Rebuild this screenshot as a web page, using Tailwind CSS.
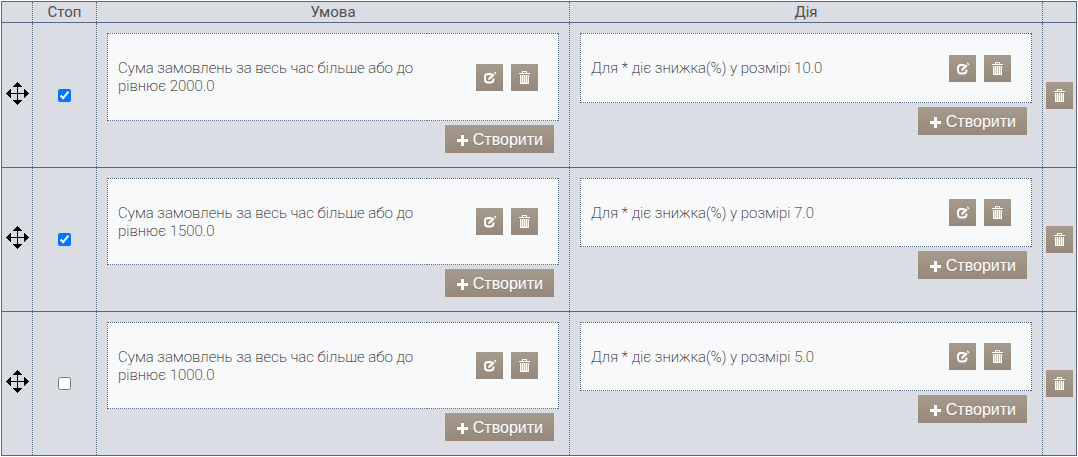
<!DOCTYPE html>
<html lang="uk">
<head>
    <meta charset="UTF-8">
    <meta name="viewport" content="width=device-width, initial-scale=1.0">
    <title>Знижки</title>
    <script src="https://cdn.jsdelivr.net/npm/@tailwindcss/browser@4"></script>
</head>
<body class="bg-white p-px font-[Roboto,sans-serif] text-[15px] leading-[18px] font-extralight text-[#111]">
    <!-- Icons -->
    <svg class="hidden">
        <symbol id="move" viewBox="0 0 23 23">
            <path shape-rendering="crispEdges" d="M11 5h1v13h-1zM5 11h6v1H5zM12 11h6v1h-6zM11 0h1v1h1v1h1v1h1v1h1v1H7V4h1V3h1V2h1V1h1zM11 23h1v-1h1v-1h1v-1h1v-1h1v-1H7v1h1v1h1v1h1v1h1zM0 11v1h1v1h1v1h1v1h1v1h1V7H4v1H3v1H2v1H1v1zM23 11v1h-1v1h-1v1h-1v1h-1v1h-1V7h1v1h1v1h1v1h1v1z"/>
        </symbol>
        <symbol id="edit" viewBox="0 0 27 27">
            <path d="M15.500 10H12a3 3 0 0 0-3 3v2.500a3 3 0 0 0 3 3h2.500a3 3 0 0 0 3-3V14.500" fill="none" stroke="#fff" stroke-width="1.800"/>
            <path d="M12 16l.7-2.500 4.300-4.300 1.700 1.700-4.300 4.300zM17.900 8.500l.9-.9 1.700 1.700-.9.900z" fill="#fff"/>
        </symbol>
        <symbol id="trash" viewBox="0 0 27 27">
            <path d="M11 7h5v2h3v1H8V9h3zM12 8v1h3V8z" fill="#fff" fill-rule="evenodd" shape-rendering="crispEdges"/>
            <path d="M9 11h9v9H9z" fill="#fff" shape-rendering="crispEdges"/>
            <path d="M10 11h1v8h-1zM12 11h1v8h-1zM14 11h1v8h-1zM16 11h1v8h-1z" fill="#a3978b" fill-opacity=".6" shape-rendering="crispEdges"/>
        </symbol>
        <symbol id="plus" viewBox="0 0 11 11">
            <path d="M4 0h3v4h4v3H7v4H4V7H0V4h4z" fill="#fff"/>
        </symbol>
    </svg>

    <table class="w-full table-fixed border-collapse border border-[#566983] bg-[#dadde4]">
        <colgroup>
            <col class="w-[31px]">
            <col class="w-[64px]">
            <col>
            <col>
            <col class="w-[34px]">
        </colgroup>
        <thead>
            <tr class="h-[21px] border-b border-[#566983] text-[#505050]">
                <th class="border-r border-r-[#566983] [border-right-style:dotted]"></th>
                <th class="border-r border-r-[#566983] [border-right-style:dotted] p-0 font-normal">Стоп</th>
                <th class="border-r border-r-[#566983] [border-right-style:dotted] p-0 font-normal">Умова</th>
                <th class="border-r border-r-[#566983] [border-right-style:dotted] p-0 font-normal">Дія</th>
                <th></th>
            </tr>
        </thead>
        <tbody>
            <tr class="h-[145px] border-b border-[#566983]">
                <td class="border-r border-r-[#566983] [border-right-style:dotted] p-0 pb-1"><svg class="mx-auto size-[23px] cursor-move"><use href="#move"/></svg></td>
                <td class="border-r border-r-[#566983] [border-right-style:dotted] p-0 text-center"><input type="checkbox" aria-label="Стоп" checked class="block mx-auto size-[13px]"></td>
                <td class="border-r border-r-[#566983] [border-right-style:dotted] p-[10px] align-top">
                    <div class="flex h-[88px] border-x border-dotted border-[#566983] bg-[#f8f9fb]">
                        <div class="flex flex-1 items-center border-y border-dotted border-[#566983] pl-[10px]">Сума замовлень за весь час більше або до рівнює 2000.0</div>
                        <div class="flex w-[131px] items-center justify-end gap-2 border-y border-dotted border-[#566983] pr-5">
                            <button type="button" aria-label="Редагувати" class="size-[27px] bg-linear-to-b from-[#a69a8e] to-[#96897b]"><svg class="size-[27px]"><use href="#edit"/></svg></button>
                            <button type="button" aria-label="Видалити" class="size-[27px] bg-linear-to-b from-[#a69a8e] to-[#96897b]"><svg class="size-[27px]"><use href="#trash"/></svg></button>
                        </div>
                    </div>
                    <button type="button" class="mt-1 mr-[5px] ml-auto flex h-7 items-center gap-[5px] bg-linear-to-b from-[#a69a8e] to-[#96897b] pt-[2px] pr-[11px] pl-3 font-[Liberation_Sans,sans-serif] text-base font-normal text-white text-shadow-2xs"><svg class="size-[11px]"><use href="#plus"/></svg>Створити</button>
                </td>
                <td class="border-r border-r-[#566983] [border-right-style:dotted] p-[10px] align-top">
                    <div class="flex h-[70px] border-x border-dotted border-[#566983] bg-[#f8f9fb]">
                        <div class="flex flex-1 items-center border-y border-dotted border-[#566983] pl-[10px]">Для * діє знижка(%) у розмірі 10.0</div>
                        <div class="flex w-[131px] items-center justify-end gap-2 border-y border-dotted border-[#566983] pr-5">
                            <button type="button" aria-label="Редагувати" class="size-[27px] bg-linear-to-b from-[#a69a8e] to-[#96897b]"><svg class="size-[27px]"><use href="#edit"/></svg></button>
                            <button type="button" aria-label="Видалити" class="size-[27px] bg-linear-to-b from-[#a69a8e] to-[#96897b]"><svg class="size-[27px]"><use href="#trash"/></svg></button>
                        </div>
                    </div>
                    <button type="button" class="mt-1 mr-[5px] ml-auto flex h-7 items-center gap-[5px] bg-linear-to-b from-[#a69a8e] to-[#96897b] pt-[2px] pr-[11px] pl-3 font-[Liberation_Sans,sans-serif] text-base font-normal text-white text-shadow-2xs"><svg class="size-[11px]"><use href="#plus"/></svg>Створити</button>
                </td>
                <td class="p-0"><button type="button" aria-label="Видалити" class="mx-auto block size-[27px] bg-linear-to-b from-[#a69a8e] to-[#96897b]"><svg class="size-[27px]"><use href="#trash"/></svg></button></td>
            </tr>
            <tr class="h-[144px] border-b border-[#566983]">
                <td class="border-r border-r-[#566983] [border-right-style:dotted] p-0 pb-1"><svg class="mx-auto size-[23px] cursor-move"><use href="#move"/></svg></td>
                <td class="border-r border-r-[#566983] [border-right-style:dotted] p-0 text-center"><input type="checkbox" aria-label="Стоп" checked class="block mx-auto size-[13px]"></td>
                <td class="border-r border-r-[#566983] [border-right-style:dotted] p-[10px] align-top">
                    <div class="flex h-[87px] border-x border-dotted border-[#566983] bg-[#f8f9fb]">
                        <div class="flex flex-1 items-center border-y border-dotted border-[#566983] pl-[10px]">Сума замовлень за весь час більше або до рівнює 1500.0</div>
                        <div class="flex w-[131px] items-center justify-end gap-2 border-y border-dotted border-[#566983] pr-5">
                            <button type="button" aria-label="Редагувати" class="size-[27px] bg-linear-to-b from-[#a69a8e] to-[#96897b]"><svg class="size-[27px]"><use href="#edit"/></svg></button>
                            <button type="button" aria-label="Видалити" class="size-[27px] bg-linear-to-b from-[#a69a8e] to-[#96897b]"><svg class="size-[27px]"><use href="#trash"/></svg></button>
                        </div>
                    </div>
                    <button type="button" class="mt-1 mr-[5px] ml-auto flex h-7 items-center gap-[5px] bg-linear-to-b from-[#a69a8e] to-[#96897b] pt-[2px] pr-[11px] pl-3 font-[Liberation_Sans,sans-serif] text-base font-normal text-white text-shadow-2xs"><svg class="size-[11px]"><use href="#plus"/></svg>Створити</button>
                </td>
                <td class="border-r border-r-[#566983] [border-right-style:dotted] p-[10px] align-top">
                    <div class="flex h-[69px] border-x border-dotted border-[#566983] bg-[#f8f9fb]">
                        <div class="flex flex-1 items-center border-y border-dotted border-[#566983] pl-[10px]">Для * діє знижка(%) у розмірі 7.0</div>
                        <div class="flex w-[131px] items-center justify-end gap-2 border-y border-dotted border-[#566983] pr-5">
                            <button type="button" aria-label="Редагувати" class="size-[27px] bg-linear-to-b from-[#a69a8e] to-[#96897b]"><svg class="size-[27px]"><use href="#edit"/></svg></button>
                            <button type="button" aria-label="Видалити" class="size-[27px] bg-linear-to-b from-[#a69a8e] to-[#96897b]"><svg class="size-[27px]"><use href="#trash"/></svg></button>
                        </div>
                    </div>
                    <button type="button" class="mt-1 mr-[5px] ml-auto flex h-7 items-center gap-[5px] bg-linear-to-b from-[#a69a8e] to-[#96897b] pt-[2px] pr-[11px] pl-3 font-[Liberation_Sans,sans-serif] text-base font-normal text-white text-shadow-2xs"><svg class="size-[11px]"><use href="#plus"/></svg>Створити</button>
                </td>
                <td class="p-0"><button type="button" aria-label="Видалити" class="mx-auto block size-[27px] bg-linear-to-b from-[#a69a8e] to-[#96897b]"><svg class="size-[27px]"><use href="#trash"/></svg></button></td>
            </tr>
            <tr class="h-[144px] border-b border-[#566983]">
                <td class="border-r border-r-[#566983] [border-right-style:dotted] p-0 pb-1"><svg class="mx-auto size-[23px] cursor-move"><use href="#move"/></svg></td>
                <td class="border-r border-r-[#566983] [border-right-style:dotted] p-0 text-center"><input type="checkbox" aria-label="Стоп" class="block mx-auto size-[13px]"></td>
                <td class="border-r border-r-[#566983] [border-right-style:dotted] p-[10px] align-top">
                    <div class="flex h-[87px] border-x border-dotted border-[#566983] bg-[#f8f9fb]">
                        <div class="flex flex-1 items-center border-y border-dotted border-[#566983] pl-[10px]">Сума замовлень за весь час більше або до рівнює 1000.0</div>
                        <div class="flex w-[131px] items-center justify-end gap-2 border-y border-dotted border-[#566983] pr-5">
                            <button type="button" aria-label="Редагувати" class="size-[27px] bg-linear-to-b from-[#a69a8e] to-[#96897b]"><svg class="size-[27px]"><use href="#edit"/></svg></button>
                            <button type="button" aria-label="Видалити" class="size-[27px] bg-linear-to-b from-[#a69a8e] to-[#96897b]"><svg class="size-[27px]"><use href="#trash"/></svg></button>
                        </div>
                    </div>
                    <button type="button" class="mt-1 mr-[5px] ml-auto flex h-7 items-center gap-[5px] bg-linear-to-b from-[#a69a8e] to-[#96897b] pt-[2px] pr-[11px] pl-3 font-[Liberation_Sans,sans-serif] text-base font-normal text-white text-shadow-2xs"><svg class="size-[11px]"><use href="#plus"/></svg>Створити</button>
                </td>
                <td class="border-r border-r-[#566983] [border-right-style:dotted] p-[10px] align-top">
                    <div class="flex h-[69px] border-x border-dotted border-[#566983] bg-[#f8f9fb]">
                        <div class="flex flex-1 items-center border-y border-dotted border-[#566983] pl-[10px]">Для * діє знижка(%) у розмірі 5.0</div>
                        <div class="flex w-[131px] items-center justify-end gap-2 border-y border-dotted border-[#566983] pr-5">
                            <button type="button" aria-label="Редагувати" class="size-[27px] bg-linear-to-b from-[#a69a8e] to-[#96897b]"><svg class="size-[27px]"><use href="#edit"/></svg></button>
                            <button type="button" aria-label="Видалити" class="size-[27px] bg-linear-to-b from-[#a69a8e] to-[#96897b]"><svg class="size-[27px]"><use href="#trash"/></svg></button>
                        </div>
                    </div>
                    <button type="button" class="mt-1 mr-[5px] ml-auto flex h-7 items-center gap-[5px] bg-linear-to-b from-[#a69a8e] to-[#96897b] pt-[2px] pr-[11px] pl-3 font-[Liberation_Sans,sans-serif] text-base font-normal text-white text-shadow-2xs"><svg class="size-[11px]"><use href="#plus"/></svg>Створити</button>
                </td>
                <td class="p-0"><button type="button" aria-label="Видалити" class="mx-auto block size-[27px] bg-linear-to-b from-[#a69a8e] to-[#96897b]"><svg class="size-[27px]"><use href="#trash"/></svg></button></td>
            </tr>
        </tbody>
    </table>
</body>
</html>
